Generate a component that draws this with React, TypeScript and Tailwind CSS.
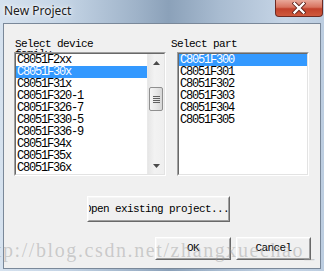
const devices = [
  'C8051F2xx',
  'C8051F30x',
  'C8051F31x',
  'C8051F320-1',
  'C8051F326-7',
  'C8051F330-5',
  'C8051F336-9',
  'C8051F34x',
  'C8051F35x',
  'C8051F36x',
]

const parts = ['C8051F300', 'C8051F301', 'C8051F302', 'C8051F303', 'C8051F304', 'C8051F305']

const mono = "font-['Liberation_Mono',monospace]"

function Arrow({ up }: { up?: boolean }) {
  return (
    <svg width="7" height="4" viewBox="0 0 7 4">
      <path d={up ? 'M0 4 L3.5 0 L7 4 Z' : 'M0 0 L3.5 4 L7 0 Z'} fill="#4a4a4a" />
    </svg>
  )
}

function ScrollBar() {
  return (
    <div className="w-[17px] flex flex-col bg-[linear-gradient(90deg,#e6e6e6,#f2f2f2_40%,#efefef)] border-l border-[#e9e9e9]">
      <div className="h-[17px] flex items-center justify-center">
        <Arrow up />
      </div>
      <div className="h-[16px]" />
      {/* Thumb */}
      <div className="mx-[1px] h-[24px] rounded-[2px] border border-[#8f8f8f] bg-[linear-gradient(90deg,#f4f4f4,#e8e8e8_50%,#d6d6d6)] flex flex-col items-center justify-center gap-[1px]">
        <div className="w-[7px] h-[1px] bg-[#606060]" />
        <div className="w-[7px] h-[1px] bg-[#606060]" />
        <div className="w-[7px] h-[1px] bg-[#606060]" />
        <div className="w-[7px] h-[1px] bg-[#606060]" />
      </div>
      <div className="flex-1" />
      <div className="h-[17px] flex items-center justify-center">
        <Arrow />
      </div>
    </div>
  )
}

function ListBox({ items, selected, scroll, className }: { items: string[]; selected: number; scroll?: boolean; className: string }) {
  return (
    <div className={`relative flex border border-t-[#a0a0a0] border-l-[#a0a0a0] border-r-white border-b-white ${className}`}>
      <div className="flex flex-1 border border-t-[#696969] border-l-[#696969] border-r-[#e3e3e3] border-b-[#e3e3e3] bg-white">
        <div className="flex-1 flex flex-col">
          {items.map((item, i) => (
            <div
              key={item}
              className={`h-[12px] leading-[12px] pl-[1px] text-[12px] tracking-[-1.2px] whitespace-nowrap ${mono} ${
                i === selected ? 'bg-[#3399ff] text-white' : 'text-black'
              }`}
            >
              {item}
            </div>
          ))}
        </div>
        {scroll && <ScrollBar />}
      </div>
    </div>
  )
}

function Button({ children, className, textClass }: { children: string; className: string; textClass?: string }) {
  return (
    <button
      type="button"
      className={`flex border border-t-white border-l-white border-r-[#696969] border-b-[#696969] ${className}`}
    >
      <div className="flex-1 flex items-center justify-center overflow-hidden border border-t-[#f6f6f6] border-l-[#f6f6f6] border-r-[#a0a0a0] border-b-[#a0a0a0] bg-[#f0f0f0]">
        <span className={`text-[11px] tracking-[-0.6px] text-black whitespace-nowrap ${mono} ${textClass ?? ''}`}>{children}</span>
      </div>
    </button>
  )
}

export default function App() {
  return (
    <div className="relative w-[324px] h-[271px] overflow-hidden flex flex-col bg-[linear-gradient(90deg,#d6e2ef_0%,#c4d4e5_20%,#9fb3c9_42%,#8ba1b9_52%,#a9bcd1_68%,#c6d5e6_88%,#bccde0_100%)]">
      {/* Title bar */}
      <div className="h-[23px] flex items-start">
        <span className="mt-[3px] ml-[4px] text-[12px] leading-[16px] text-[#1c1c1c] font-['Noto_Sans',sans-serif] [text-shadow:0_0_6px_#ffffff,0_0_3px_#ffffff]">
          New Project
        </span>
        <div className="ml-auto mr-[1px] w-[48px] h-[17px] rounded-b-[4px] border border-t-0 border-[#6e2a22] bg-[linear-gradient(180deg,#e9a899_0%,#d8735f_45%,#c2412b_55%,#cf5a3e_100%)] flex items-center justify-center">
          <svg width="14" height="12" viewBox="0 0 14 12">
            <path d="M2.5 1.5 L11.5 10.5 M11.5 1.5 L2.5 10.5" stroke="#5a1f18" strokeWidth="4" strokeLinecap="square" />
            <path d="M2.5 1.5 L11.5 10.5 M11.5 1.5 L2.5 10.5" stroke="#ffffff" strokeWidth="2.4" strokeLinecap="square" />
          </svg>
        </div>
      </div>

      {/* Client area */}
      <div className="mx-[3px] mb-[2px] flex-1 border border-[#7a8899] bg-[#f0f0f0] flex flex-col">
        <div className="flex mt-[15px] ml-[10px]">
          <div className="w-[152px] flex flex-col">
            <div className={`h-[13px] w-[80px] pl-[1px] text-[11px] leading-[10px] tracking-[-0.6px] text-black ${mono}`}>
              Select device family
            </div>
            <ListBox items={devices} selected={1} scroll className="h-[124px]" />
          </div>
          <div className="ml-[5px] flex flex-col">
            <div className={`h-[13px] text-[11px] leading-[10px] tracking-[-0.6px] text-black ${mono}`}>Select part</div>
            <ListBox items={parts} selected={0} className="ml-[6px] w-[132px] h-[124px]" />
          </div>
        </div>

        <Button className="mt-[20px] ml-[83px] w-[143px] h-[26px]" textClass="ml-[-3px]">
          Open existing project...
        </Button>

        <div className="mt-[15px] flex justify-end gap-[5px] pr-[9px]">
          <Button className="w-[76px] h-[23px]">OK</Button>
          <Button className="w-[75px] h-[23px]">Cancel</Button>
        </div>
      </div>

      {/* Watermark */}
      <div className="absolute left-[-23px] top-[240px] pointer-events-none whitespace-nowrap text-[20px] leading-[20px] tracking-[1.6px] text-[#9a9a9a]/45 font-['Liberation_Serif',serif]">
        http://blog.csdn.net/zhangxuechao_
      </div>
    </div>
  )
}
